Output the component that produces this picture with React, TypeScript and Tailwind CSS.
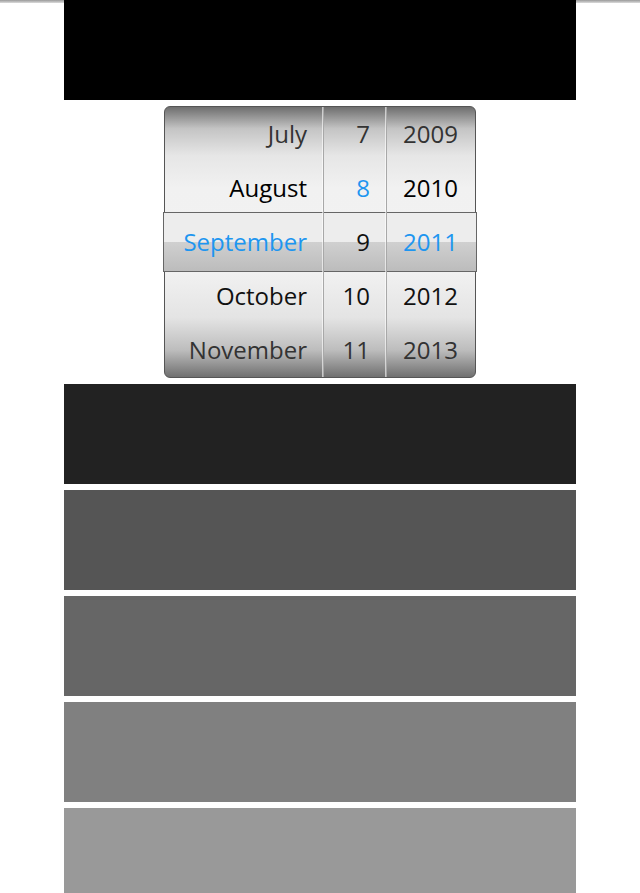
const rows = [
  { month: 'July', day: '7', year: '2009', tone: 'text-[#333]' },
  { month: 'August', day: '8', year: '2010', tone: 'text-black' },
  { month: 'September', day: '9', year: '2011', tone: 'text-[#111]' },
  { month: 'October', day: '10', year: '2012', tone: 'text-[#111]' },
  { month: 'November', day: '11', year: '2013', tone: 'text-[#333]' },
];

const blue = 'text-[#1e96f0]';

function Column({ field, width, pad, blueRows }: { field: 'month' | 'day' | 'year'; width: string; pad: string; blueRows: number[] }) {
  return (
    <div className={`${width} relative z-10 flex flex-col`}>
      {rows.map((r, i) => (
        <div
          key={r[field]}
          className={`h-[54px] flex items-center justify-end ${pad} text-[24px] ${blueRows.includes(i) ? blue : r.tone}`}
        >
          {r[field]}
        </div>
      ))}
    </div>
  );
}

function Divider() {
  return <div className="relative z-10 w-px bg-[#a8a8a8] shadow-[-1px_0_0_rgba(255,255,255,0.6)]" />;
}

export default function App() {
  return (
    <div className="min-h-screen bg-white overflow-hidden" style={{ fontFamily: '"Open Sans", "Noto Sans", sans-serif' }}>
      {/* top strip */}
      <div className="flex">
        <div className="flex-1 h-[3px] bg-gradient-to-b from-[#9a9a9a] to-[#dcdcdc]" />
        <div className="w-[512px] h-[100px] bg-black" />
        <div className="flex-1 h-[3px] bg-gradient-to-b from-[#9a9a9a] to-[#dcdcdc]" />
      </div>

      {/* date picker */}
      <div className="relative mx-auto mt-[6px] w-[312px] h-[272px]">
        <div className="flex h-full rounded-[6px] border border-[#555] overflow-hidden bg-[linear-gradient(to_bottom,#6e6e6e_0%,#c4c4c4_8%,#e6e6e6_18%,#f1f1f1_30%,#f2f2f2_60%,#e4e4e4_78%,#bdbdbd_90%,#707070_100%)]">
          {/* selection band, sits under the wheel text */}
          <div className="absolute z-0 left-[-1px] right-[-1px] top-[106px] h-[60px] border border-[#666] flex flex-col">
            <div className="h-[29px] bg-[#ededed]" />
            <div className="flex-1 bg-gradient-to-b from-[#d0d0d0] to-[#bcbcbc]" />
          </div>
          <Column field="month" width="w-[158px]" pad="pr-[16px]" blueRows={[2]} />
          <Divider />
          <Column field="day" width="w-[62px]" pad="pr-[16px]" blueRows={[1]} />
          <Divider />
          <Column field="year" width="w-[88px]" pad="pr-[17px]" blueRows={[2]} />
        </div>
      </div>

      {/* shade blocks */}
      <div className="mx-auto w-[512px] flex flex-col gap-[6px] mt-[6px]">
        <div className="h-[100px] bg-[#222222]" />
        <div className="h-[100px] bg-[#555555]" />
        <div className="h-[100px] bg-[#666666]" />
        <div className="h-[100px] bg-[#808080]" />
        <div className="h-[100px] bg-[#999999]" />
      </div>
    </div>
  );
}
